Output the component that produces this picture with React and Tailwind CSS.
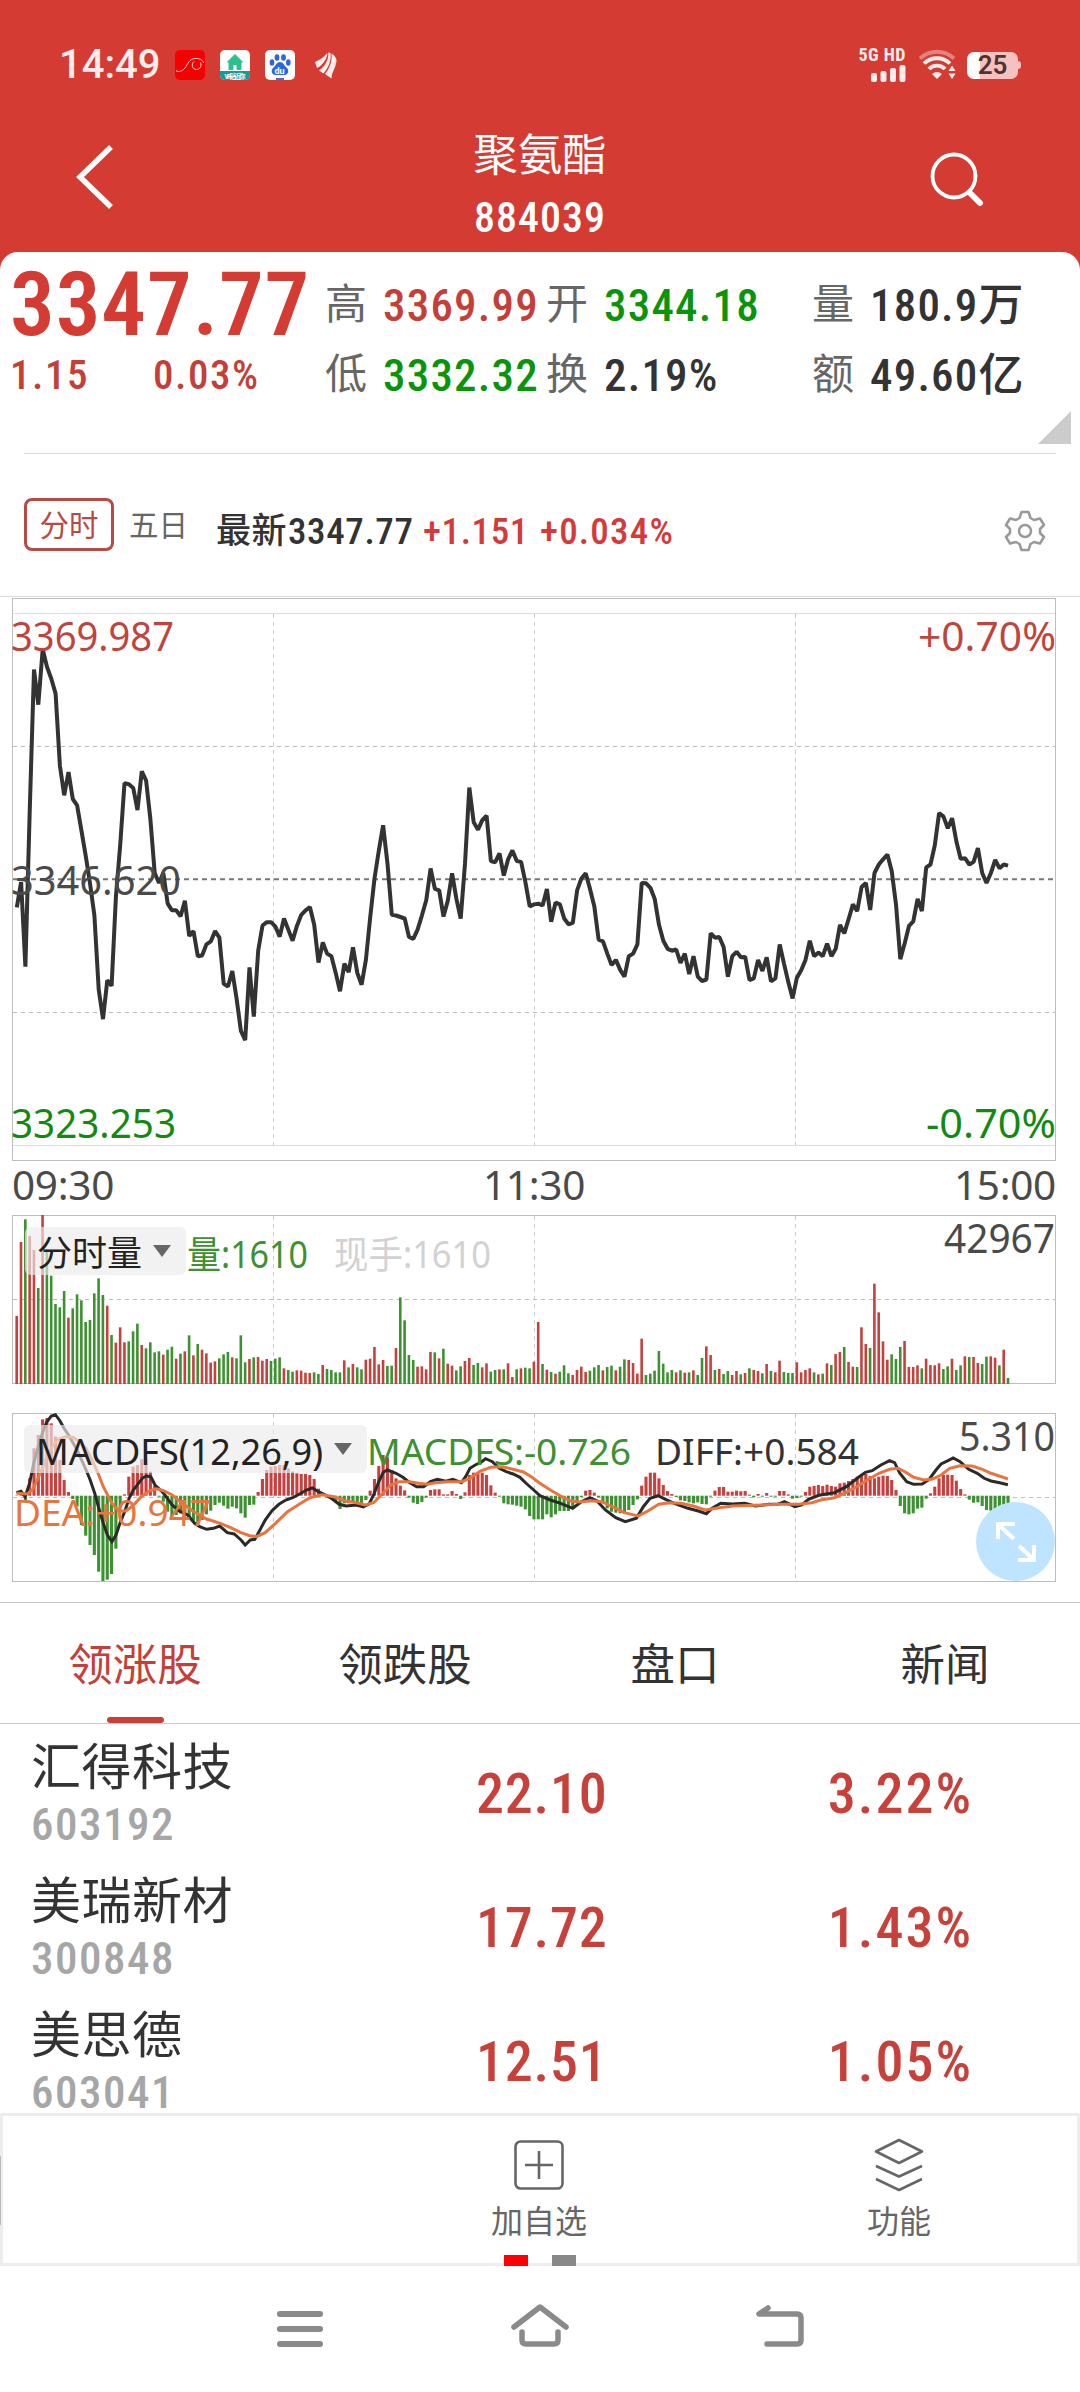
import React from 'react';

// One sample per trading minute, in plot units (larger is lower on the chart)
const PRICE = [
  858, 790, 1018, 600, 215, 310, 160, 208, 240, 280, 475, 555, 492, 565, 582, 650, 720, 795, 880, 1080,
  1160, 1055, 1070, 830, 690, 522, 525, 535, 595, 490, 515, 620, 765, 792, 765, 848, 866, 866, 882, 840,
  935, 922, 990, 988, 958, 950, 922, 940, 1065, 1072, 1030, 1105, 1192, 1217, 1020, 1153, 975, 907, 898, 898,
  910, 937, 888, 918, 948, 908, 878, 866, 857, 905, 1007, 953, 983, 990, 1035, 1085, 1010, 1033, 966, 1035,
  1067, 1000, 885, 780, 705, 636, 740, 878, 880, 884, 888, 938, 943, 918, 880, 838, 753, 808, 812, 883,
  840, 766, 835, 888, 740, 534, 628, 648, 622, 610, 733, 736, 712, 772, 728, 704, 733, 735, 790, 855,
  850, 848, 853, 808, 897, 845, 850, 888, 904, 900, 812, 780, 766, 808, 855, 945, 950, 983, 1014, 1000,
  1027, 1045, 990, 983, 958, 792, 793, 805, 835, 905, 948, 970, 975, 972, 1008, 983, 1038, 990, 1045, 1057,
  1053, 928, 940, 938, 965, 1045, 990, 978, 993, 992, 1055, 1050, 1000, 1030, 993, 1058, 1050, 958, 1010, 1060,
  1104, 1048, 1028, 1000, 948, 990, 980, 990, 956, 990, 970, 905, 928, 890, 850, 868, 803, 792, 865, 765,
  742, 728, 715, 760, 850, 998, 955, 908, 896, 835, 868, 750, 742, 690, 603, 612, 644, 617, 680, 727,
  725, 742, 735, 698, 765, 792, 765, 730, 752, 742, 745,
];

const VOLUME = (
  '498r 276r 208g 258r 300r 414g 195r 298g 377g 462g 472g 423g 503r 475g 433g 451g 516g 510g 430g 385g ' +
  '435g 467r 555g 578r 532r 577r 574g 544g 521g 585r 595g 577g 607g 604g 614r 599g 590g 626r 611g 604r ' +
  '556g 616r 582g 599r 610r 638r 634r 625g 613g 606g 622r 625g 556g 637g 627r 622g 621r 632r 627r 633g ' +
  '626g 622g 655r 660g 665g 661r 662r 668r 669r 667g 672g 645r 657g 660g 667g 667g 631r 652g 642r 652g ' +
  '658g 629r 626r 591r 643r 630r 648g 647g 594r 442g 511g 615g 630g 650r 649r 658r 606r 607g 625r 596g ' +
  '641r 647r 661g 649g 633r 624r 645g 639g 652r 640r 665g 660g 658r 658g 640r 681r 658g 655r 653g 655g ' +
  '635r 516r 642g 659r 666g 671r 665g 646g 670g 675r 660r 650r 666r 662g 652g 645g 661r 651g 647g 661r ' +
  '650g 628g 630r 639r 671r 566r 675g 671g 662g 603g 641g 667g 660g 667r 661g 668r 667g 661r 675g 624g ' +
  '589r 615r 660g 657r 672g 663g 675r 663r 673g 669r 655g 660r 663r 670g 642r 663g 667r 632r 666g 669g ' +
  '669g 637r 667r 660r 655r 667g 673r 671g 640r 645g 612r 606r 591g 636r 650r 651g 532r 582r 594g 401r ' +
  '487r 574r 629r 613g 627g 591g 573r 651r 651r 646r 655g 626r 645r 646r 640r 657g 649g 626r 660g 646g ' +
  '619r 621g 621r 639r 642g 620g 619r 623r 646g 599r 684g'
).split(' ');

const MACD = [
  1036, 1034, 1058, 985, 895, 855, 808, 804, 820, 860, 930, 990, 1026, 1047, 1070, 1125, 1157, 1185, 1215, 1265,
  1293, 1289, 1272, 1196, 1075, 1033, 980, 950, 945, 928, 925, 965, 1008, 1040, 1055, 1085, 1100, 1095, 1090, 1100,
  1105, 1112, 1125, 1110, 1093, 1082, 1065, 1058, 1067, 1076, 1070, 1075, 1090, 1103, 1065, 1064, 1026, 987, 960, 950,
  948, 945, 945, 955, 965, 970, 972, 972, 975, 987, 1016, 1030, 1036, 1040, 1055, 1077, 1060, 1060, 1055, 1062,
  1060, 1050, 1022, 987, 948, 915, 922, 960, 985, 1007, 1021, 1043, 1058, 1062, 1056, 1043, 1020, 1018, 1018, 1033,
  1033, 1023, 1032, 1047, 1027, 975, 968, 968, 968, 975, 1006, 1028, 1040, 1060, 1063, 1064, 1067, 1070, 1078, 1098,
  1108, 1108, 1108, 1093, 1102, 1093, 1083, 1083, 1083, 1075, 1055, 1041, 1022, 1020, 1028, 1042, 1060, 1075, 1085, 1088,
  1090, 1092, 1080, 1065, 1048, 1007, 980, 968, 968, 985, 1005, 1023, 1032, 1041, 1051, 1053, 1057, 1060, 1057, 1062,
  1063, 1040, 1022, 1011, 1011, 1025, 1025, 1022, 1024, 1023, 1034, 1042, 1032, 1040, 1029, 1040, 1040, 1023, 1023, 1033,
  1046, 1044, 1040, 1026, 1010, 1008, 1005, 1008, 1004, 1008, 1010, 1000, 998, 993, 987, 980, 972, 972, 978, 985,
  980, 977, 978, 990, 1020, 1068, 1090, 1093, 1090, 1076, 1073, 1046, 1030, 1010, 985, 975, 974, 975, 992, 1017,
  1033, 1049, 1058, 1057, 1068, 1080, 1082, 1078, 1075, 1071, 1069,
];

const DIFF = [
  48, 1028, 61, 1024, 73, 1040, 86, 1000, 98, 940, 111, 890, 123, 850, 136, 815, 149, 798, 161, 794, 174, 812,
  186, 835, 199, 855, 212, 878, 224, 900, 237, 930, 250, 960, 262, 990, 275, 1030, 287, 1075, 300, 1120, 312, 1155,
  325, 1175, 337, 1155, 350, 1115, 362, 1085, 375, 1045, 387, 1020, 400, 1003, 413, 985, 425, 978, 438, 980,
  450, 1005, 463, 1017, 475, 1030, 488, 1048, 500, 1065, 520, 1083, 545, 1095, 565, 1120, 580, 1130, 600, 1138,
  620, 1135, 638, 1128, 660, 1148, 680, 1152, 700, 1170, 712, 1185, 727, 1170, 740, 1168, 752, 1145, 770, 1110,
  790, 1082, 810, 1063, 830, 1050, 850, 1043, 870, 1032, 890, 1020, 907, 1014, 925, 1025, 945, 1035, 965, 1047,
  985, 1063, 1005, 1068, 1035, 1065, 1055, 1071, 1072, 1062, 1085, 1035, 1100, 995, 1113, 967, 1125, 960, 1150, 970,
  1170, 982, 1190, 998, 1210, 1010, 1230, 1010, 1250, 995, 1270, 988, 1295, 994, 1315, 988, 1340, 998, 1352, 980,
  1365, 955, 1380, 945, 1395, 938, 1410, 926, 1430, 935, 1450, 955, 1470, 965, 1490, 972, 1510, 982, 1530, 1002,
  1550, 1020, 1568, 1037, 1598, 1050, 1628, 1060, 1663, 1075, 1688, 1055, 1713, 1043, 1733, 1052, 1758, 1080,
  1788, 1103, 1816, 1115, 1848, 1105, 1868, 1070, 1888, 1045, 1911, 1037, 1933, 1048, 1958, 1060, 1998, 1075,
  2028, 1083, 2051, 1091, 2068, 1075, 2093, 1060, 2128, 1062, 2163, 1060, 2193, 1068, 2233, 1063, 2258, 1063,
  2278, 1055, 2308, 1070, 2328, 1065, 2348, 1048, 2378, 1036, 2423, 1028, 2458, 1010, 2493, 982, 2513, 967,
  2533, 962, 2558, 945, 2583, 932, 2598, 938, 2613, 970, 2633, 995, 2653, 1003, 2678, 1002, 2698, 988, 2718, 960,
  2733, 942, 2753, 932, 2768, 924, 2788, 935, 2813, 958, 2838, 970, 2858, 985, 2878, 993, 2903, 998, 2927, 1004,
];

const DEA = [
  48, 1030, 80, 1032, 95, 1018, 110, 985, 125, 950, 140, 910, 155, 885, 170, 868, 190, 860, 212, 862, 230, 875,
  250, 895, 265, 925, 285, 970, 300, 1010, 325, 1060, 345, 1083, 365, 1083, 385, 1068, 410, 1040, 435, 1022,
  455, 1016, 475, 1022, 500, 1035, 530, 1060, 560, 1083, 600, 1107, 640, 1120, 670, 1133, 700, 1148, 725, 1157,
  745, 1160, 770, 1148, 800, 1120, 835, 1085, 870, 1062, 900, 1043, 935, 1034, 970, 1040, 1000, 1052, 1035, 1058,
  1060, 1065, 1085, 1058, 1110, 1032, 1135, 1005, 1160, 995, 1190, 995, 1215, 1000, 1240, 1003, 1265, 998,
  1300, 995, 1340, 995, 1365, 985, 1395, 963, 1425, 952, 1460, 950, 1490, 958, 1520, 966, 1545, 982, 1568, 1000,
  1598, 1020, 1628, 1038, 1658, 1053, 1683, 1056, 1718, 1052, 1748, 1055, 1778, 1070, 1813, 1088, 1853, 1098,
  1878, 1085, 1913, 1063, 1943, 1058, 1978, 1060, 2013, 1068, 2048, 1080, 2088, 1073, 2128, 1068, 2188, 1066,
  2268, 1063, 2318, 1063, 2358, 1058, 2383, 1050, 2423, 1043, 2458, 1027, 2488, 1010, 2518, 990, 2553, 970,
  2583, 958, 2608, 955, 2628, 965, 2653, 982, 2683, 990, 2708, 987, 2733, 975, 2758, 955, 2788, 947, 2823, 948,
  2853, 958, 2878, 970, 2908, 980, 2927, 987,
];

const STOCKS = [
  { name: '汇得科技', code: '603192', price: '22.10', change: '3.22%' },
  { name: '美瑞新材', code: '300848', price: '17.72', change: '1.43%' },
  { name: '美思德', code: '603041', price: '12.51', change: '1.05%' },
];

const TABS = ['领涨股', '领跌股', '盘口', '新闻'];

const RED = '#c8403d';
const GREEN = '#3c9130';

const minuteX = (i) => 16.8 + i * 4.31;

// Flat [x, y, x, y, ...] list to an svg points string
function toPoints(list, top) {
  const out = [];
  for (let i = 0; i < list.length; i += 2) {
    out.push(`${(list[i] / 2.904).toFixed(1)},${(list[i + 1] / 3 - top).toFixed(1)}`);
  }
  return out.join(' ');
}

function Label({ x, y, w, size = 40.5, fill = '#4a4a4a', children }) {
  return (
    <text
      x={x}
      y={y}
      textLength={w}
      lengthAdjust="spacingAndGlyphs"
      fontSize={size}
      fill={fill}
      className="font-['Noto_Sans','Noto_Sans_CJK_SC',sans-serif]"
    >
      {children}
    </text>
  );
}

function VerticalGrid({ y1, y2 }) {
  return [273.5, 534.5, 795.5].map((x) => (
    <line key={x} x1={x} x2={x} y1={y1} y2={y2} stroke="#c8c8c8" strokeDasharray="4 4" />
  ));
}

function PriceChart() {
  const points = PRICE.map((v, i) => `${minuteX(i).toFixed(1)},${(v / 2.7034 - 7).toFixed(1)}`).join(' ');
  return (
    <svg className="block overflow-visible" width="1080" height="566" viewBox="0 0 1080 566">
      <rect x="12.5" y="1.5" width="1043" height="562" fill="none" stroke="#bdbdbd" />
      <path d="M13 16.5H1055M13 548.5H1055" stroke="#dedede" />
      <VerticalGrid y1={17} y2={548} />
      <path d="M13 149.5H1055M13 415.5H1055" stroke="#bdbdbd" strokeDasharray="4 4" />
      <line x1="13" x2="1055" y1="282.3" y2="282.3" stroke="#777" strokeWidth="2" strokeDasharray="5 4" />
      <polyline points={points} fill="none" stroke="#333" strokeWidth="4" strokeLinejoin="bevel" />
      <Label x={11} y={53.5} w={163} fill="#bf443d">3369.987</Label>
      <Label x={918} y={53.5} w={138} fill="#bf443d">+0.70%</Label>
      <Label x={11} y={298} w={170}>3346.620</Label>
      <Label x={11} y={540.5} w={165} fill="#128a12">3323.253</Label>
      <Label x={926} y={540.5} w={130} fill="#128a12">-0.70%</Label>
    </svg>
  );
}

function VolumeChart() {
  return (
    <svg className="block overflow-visible" width="1080" height="176" viewBox="0 0 1080 176">
      <rect x="12.5" y="3.5" width="1043" height="168" fill="none" stroke="#bdbdbd" />
      <VerticalGrid y1={4} y2={171} />
      <path d="M13 87.5H1055" stroke="#bdbdbd" strokeDasharray="4 4" />
      {VOLUME.map((v, i) => {
        const y = parseInt(v, 10) / 3 - 62;
        return (
          <rect key={i} x={minuteX(i) - 1.4} y={y} width="2.6" height={172 - y} fill={v.endsWith('r') ? RED : GREEN} />
        );
      })}
      <rect x="25" y="15" width="161" height="48" rx="6" fill="#ebebeb" fillOpacity="0.66" />
      <Label x={37} y={54} w={105} size={35} fill="#222">分时量</Label>
      <path d="M153 33H171L162 45Z" fill="#666" />
      <Label x={187} y={55.5} w={121} size={38} fill={GREEN}>量:1610</Label>
      <Label x={334} y={55.5} w={157} size={38} fill="#d2d2d2">现手:1610</Label>
      <Label x={944} y={40.5} w={111}>42967</Label>
    </svg>
  );
}

function MacdChart() {
  return (
    <svg className="block overflow-visible" width="1080" height="176" viewBox="0 0 1080 176">
      <rect x="12.5" y="3.5" width="1043" height="168" fill="none" stroke="#bdbdbd" />
      <VerticalGrid y1={4} y2={171} />
      <path d="M13 87.5H1055" stroke="#bdbdbd" strokeDasharray="4 4" />
      {MACD.map((v, i) => {
        const y = v / 3 - 260;
        const base = 85.7;
        return (
          <rect
            key={i}
            x={minuteX(i) - 1.6}
            y={Math.min(y, base)}
            width="3.1"
            height={Math.abs(base - y)}
            fill={v < 1037 ? RED : GREEN}
          />
        );
      })}
      <polyline points={toPoints(DIFF, 260)} fill="none" stroke="#2a2a2a" strokeWidth="3" />
      <polyline points={toPoints(DEA, 260)} fill="none" stroke="#e8743f" strokeWidth="3" />
      <rect x="24" y="15" width="343" height="48" rx="6" fill="#ebebeb" fillOpacity="0.66" />
      <Label x={36} y={54.5} w={287} size={37} fill="#222">MACDFS(12,26,9)</Label>
      <path d="M334 33H352L343 45Z" fill="#666" />
      <Label x={367} y={54.5} w={264} size={37} fill={GREEN}>MACDFS:-0.726</Label>
      <Label x={655} y={54.5} w={204} size={37} fill="#333">DIFF:+0.584</Label>
      <Label x={14} y={115.5} w={197} size={37} fill="#e8743f">DEA:+0.947</Label>
      <Label x={959} y={41} w={96}>5.310</Label>
    </svg>
  );
}

function StatusBar() {
  return (
    <div className="flex h-[130px] items-center pr-[59px] pl-[59px]">
      <span className="w-[116px] text-[40px] leading-none font-medium text-[#ffeceb]">14:49</span>
      <svg className="mr-[15px]" width="30" height="30" viewBox="0 0 30 30">
        <rect width="30" height="30" rx="5" fill="#f80000" />
        <path d="M1 20.500C3 22.500 7 21.500 10 18C13 14 14 9 20 8.500C26 8 28 11 28.500 13" fill="none" stroke="#ffd9d6" />
        <path d="M19 11.500C16 14 17 19.500 21.500 19.500C25 19.500 27 16 25.500 12.500" fill="none" stroke="#ffd9d6" />
      </svg>
      <svg className="mr-[15px]" width="30" height="30" viewBox="0 0 30 30">
        <rect width="30" height="30" rx="5" fill="#fff" />
        <path d="M0 21H30V25A5 5 0 0 1 25 30H5A5 5 0 0 1 0 25Z" fill="#139c9b" />
        <path d="M15 4.500L7.500 12H9V19.500H13V14.500H17V19.500H21V12H22.500Z" fill="#2cc08c" stroke="#2cc08c" />
        <text x="4.500" y="28.500" fontSize="6.500" fontWeight="700" textLength="21" fill="#fff">VR贴近你</text>
      </svg>
      <svg className="mr-[20px]" width="30" height="30" viewBox="0 0 30 30">
        <rect width="30" height="30" rx="5" fill="#fff" />
        <g fill="#2c66dc">
          <ellipse cx="7" cy="12.500" rx="2.300" ry="3.200" />
          <ellipse cx="12" cy="7.500" rx="2.400" ry="3.300" />
          <ellipse cx="18.500" cy="7.500" rx="2.400" ry="3.300" />
          <ellipse cx="23.300" cy="12.500" rx="2.300" ry="3.200" />
          <path d="M15 12C11.500 12 11 15.500 8.500 17.500C5.500 20 6.500 25 10.500 25H19.500C23.500 25 24.500 20 21.500 17.500C19 15.500 18.500 12 15 12Z" />
        </g>
        <rect x="11" y="28" width="8" height="2" fill="#4f62e6" />
        <text x="9.500" y="23.500" fontSize="9" fontWeight="700" fill="#fff">du</text>
      </svg>
      <svg width="22" height="27" viewBox="0 0 22 27" fill="#ffeceb">
        <path d="M0 10C5 8 9 5 12.500 1C12 7 7.500 13.500 2 16Z" />
        <path d="M13.300 0.500C14 8 9.500 15 4 18.500L8.500 21.500C14 15 16.500 8 15.500 1Z" />
        <path d="M16.500 1.500C17.500 10 14 17 10 22L16.500 26.500C16.500 20 21.500 15 21.500 8C21 5 19 3 16.500 1.500Z" />
      </svg>
      <div className="mr-[13px] ml-auto flex flex-col items-end gap-[4px]">
        <span className="font-stretch-semi-condensed text-[18px] leading-[13px] font-bold tracking-[0.5px] text-[#ffeceb]">5G HD</span>
        <svg width="35" height="17" viewBox="0 0 35 17" fill="#ffeceb">
          <rect y="8" width="6" height="9" rx="2" />
          <rect x="9.500" y="6" width="6" height="11" rx="2" />
          <rect x="19" y="3" width="6" height="14" rx="2" />
          <rect x="28.500" width="6" height="17" rx="2" />
        </svg>
      </div>
      <svg className="mr-[12px] overflow-visible" width="36" height="30" viewBox="0 0 36 30" fill="none" strokeWidth="3.800">
        <path d="M1 8.500C11 -0.500 25 -0.500 35 8.500" stroke="#e5827d" />
        <path d="M5 13.500C12 6.500 24 6.500 31 13.500" stroke="#ffeceb" />
        <path d="M10 19C14 14.500 22 14.500 26 19" stroke="#ffeceb" />
        <path d="M13 24Q18 20 23 24L18 29Z" fill="#ffeceb" />
        <path d="M29.500 21L33 15.500L36.500 21ZM29.500 23.500L33 29L36.500 23.500Z" fill="#ffeceb" />
      </svg>
      <div className="flex items-center">
        <div className="flex h-[27px] w-[51px] items-center justify-center overflow-hidden rounded-[7px] bg-linear-to-r from-white from-25% to-[#f5c2c0] to-25%">
          <span className="text-[26px] leading-[27px] font-semibold text-[#4d3331]">25</span>
        </div>
        <div className="h-2 w-[3px] rounded-r-[3px] bg-[#f5c2c0]" />
      </div>
    </div>
  );
}

function TitleBar() {
  return (
    <div className="flex h-[122px] items-start justify-between pr-[96px] pl-[76px]">
      <svg className="mt-[15px]" width="37" height="64" viewBox="0 0 37 64">
        <path d="M35 2L4 32L35 62" fill="none" stroke="#fff" strokeWidth="5.500" />
      </svg>
      <div className="flex w-[177px] flex-col items-center pt-[2px] pl-[37px] text-white">
        <span className="h-[60px] text-[44.5px] leading-[48px] whitespace-nowrap">聚氨酯</span>
        <span className="font-stretch-semi-condensed text-[42px] leading-[52px] font-medium tracking-[1px]">884039</span>
      </div>
      <svg className="mt-[22px]" width="54" height="56" viewBox="0 0 54 56" fill="none" stroke="#fff" strokeLinecap="round">
        <circle cx="24" cy="24" r="21.500" strokeWidth="3.800" />
        <path d="M41 42L50 51" strokeWidth="6" />
      </svg>
    </div>
  );
}

function Stat({ label, value, className }) {
  return (
    <div className="flex items-center whitespace-nowrap">
      <span className="w-[58px] text-[42px] leading-[46px] text-[#666]">{label}</span>
      <span className={`font-stretch-semi-condensed text-[45px] leading-none font-medium tracking-[1.2px] ${className}`}>{value}</span>
    </div>
  );
}

function Quote() {
  return (
    <div className="rounded-t-[18px] bg-white pt-[18px]">
      <div className="grid grid-cols-[315px_221px_266px_1fr] grid-rows-[70px_70px] pl-[10px]">
        <div className="font-stretch-semi-condensed flex items-center text-[89px] leading-[70px] font-semibold tracking-[0.9px] text-[#d33b33]">
          3347.77
        </div>
        <Stat label="高" value="3369.99" className="text-[#c43f38]" />
        <Stat label="开" value="3344.18" className="text-[#0a940a]" />
        <Stat label="量" value="180.9万" className="text-[#333]" />
        <div className="font-stretch-semi-condensed flex items-center text-[41px] leading-none font-medium tracking-[1.5px] text-[#c43f38]">
          <span className="w-[143px]">1.15</span>
          <span>0.03%</span>
        </div>
        <Stat label="低" value="3332.32" className="text-[#0a940a]" />
        <Stat label="换" value="2.19%" className="text-[#333]" />
        <Stat label="额" value="49.60亿" className="text-[#333]" />
      </div>
      <div className="flex h-[43px] justify-end pr-[9px]">
        <svg className="mt-px" width="33" height="33" viewBox="0 0 33 33">
          <path d="M33 0V33H0Z" fill="#ccc" />
        </svg>
      </div>
      <div className="mx-6 border-b border-[#dcdcdc]" />
    </div>
  );
}

function PeriodBar() {
  return (
    <div className="flex h-[143px] items-start border-b border-[#dcdcdc] pt-[44px] pr-[34px] pl-6">
      <div className="flex h-[53px] w-[90px] items-center justify-center rounded-lg border-[3px] border-[#b84a45] pt-[3px] text-[29.5px] text-[#b84a45]">
        分时
      </div>
      <span className="mt-[2px] ml-[15px] w-[73px] text-[29.5px] leading-[53px] text-[#666]">五日</span>
      <div className="font-stretch-semi-condensed mt-[7px] ml-[14px] flex text-[37px] leading-[53px] font-medium tracking-[0.6px] whitespace-nowrap text-[#d53a3a]">
        <span className="w-[72px] text-[35px] text-[#333]">最新</span>
        <span className="w-[135px] text-[#333]">3347.77</span>
        <span className="w-[117px]">+1.151</span>
        <span className="tracking-[1.2px]">+0.034%</span>
      </div>
      <svg className="mt-[12px] ml-auto" width="42" height="42" viewBox="0 0 42 42" fill="none" stroke="#999" strokeWidth="2.500" strokeLinejoin="round">
        <path d="M17.500 2H24.500L26.500 8L30 10L36 8.500L40 15L36 19V23L40 27L36 33.500L30 32L26.500 34L24.500 40H17.500L15.500 34L12 32L6 33.500L2 27L6 23V19L2 15L6 8.500L12 10L15.500 8Z" />
        <circle cx="21" cy="21" r="6" />
      </svg>
    </div>
  );
}

function StockRow({ stock }) {
  return (
    <div className="flex h-[134px] shrink-0 items-start pl-[31px]">
      <div className="flex w-[445px] flex-col">
        <span className="mt-[16px] h-[56px] text-[50px] leading-[56px] tracking-[0.5px] text-[#333]">{stock.name}</span>
        <span className="font-stretch-semi-condensed pt-px text-[45px] leading-[56px] font-medium tracking-[1.5px] text-[#a6a6a6]">{stock.code}</span>
      </div>
      <span className="font-stretch-semi-condensed mt-[40px] w-[200px] text-[56px] leading-[60px] font-medium tracking-[0.8px] text-[#c8403a]">
        {stock.price}
      </span>
      <span className="font-stretch-semi-condensed mt-[40px] w-[297px] text-right text-[56px] leading-[60px] font-medium tracking-[2px] text-[#c8403a]">
        {stock.change}
      </span>
    </div>
  );
}

function BottomBar() {
  return (
    <div className="relative flex h-[153px] shrink-0 justify-end border-[3px] border-[#ededed] bg-white text-[32px] leading-[38px] text-[#666]">
      <div className="absolute top-[40px] -left-[3px] h-[69px] w-px bg-[#bbb]" />
      <div className="flex w-[360px] flex-col items-center pt-[24px]">
        <svg width="50" height="50" viewBox="0 0 50 50" fill="none" stroke="#666" strokeWidth="2.600">
          <rect x="1.500" y="1.500" width="47" height="47" rx="5" />
          <path d="M25 11V39M11 25H39" />
        </svg>
        <span className="mt-[13px]">加自选</span>
      </div>
      <div className="-mr-[2px] flex w-[360px] flex-col items-center pt-[22px]">
        <svg width="52" height="54" viewBox="0 0 52 54" fill="none" stroke="#666" strokeWidth="2.600" strokeLinejoin="round">
          <path d="M26 2L49 13.500L26 25L3 13.500Z" />
          <path d="M3 28L26 38.500L49 28M3 41L26 52L49 41" />
        </svg>
        <span className="mt-[11px]">功能</span>
      </div>
      <div className="absolute -bottom-[3px] left-[501px] flex gap-6">
        <div className="h-[11px] w-6 bg-[#f00]" />
        <div className="h-[11px] w-6 bg-[#888]" />
      </div>
    </div>
  );
}

function SystemNav() {
  return (
    <div className="flex h-[126px] items-start gap-[187px] pt-[37px] pl-[276px]">
      <svg width="48" height="46" viewBox="0 0 48 46" stroke="#8a8a8a" strokeWidth="6" strokeLinecap="round">
        <path d="M4 11H44M4 26H44M4 41H44" />
      </svg>
      <svg width="58" height="46" viewBox="0 0 58 46" fill="none" stroke="#8a8a8a" strokeWidth="5.500" strokeLinecap="round" strokeLinejoin="round">
        <path d="M3 24L29 4L55 24" />
        <path d="M11 29V37Q11 41 15 41H43Q47 41 47 37V29" />
      </svg>
      <svg width="50" height="46" viewBox="0 0 50 46" fill="none" stroke="#8a8a8a" strokeWidth="5.500" strokeLinecap="round" strokeLinejoin="round">
        <path d="M12 5L3 11H41Q45 11 45 15V37Q45 41 41 41H11" />
      </svg>
    </div>
  );
}

export default function App() {
  return (
    <div className="flex h-[2392px] w-[1080px] flex-col overflow-hidden bg-white font-[Roboto,'Noto_Sans_CJK_SC',sans-serif]">
      <div className="bg-[#d33b33]">
        <StatusBar />
        <TitleBar />
        <Quote />
      </div>
      <PeriodBar />

      <div className="relative">
        <PriceChart />
        <div className="flex h-[49px] justify-between pr-[24px] pl-3 font-['Noto_Sans',sans-serif] text-[40.5px] leading-[44px] tracking-[-0.3px] text-[#4a4a4a]">
          <span>09:30</span>
          <span>11:30</span>
          <span>15:00</span>
        </div>
        <VolumeChart />
        <div className="h-[22px]" />
        <MacdChart />
        <button className="absolute top-[905px] left-[976px] flex size-[79px] items-center justify-center rounded-full bg-[#bfe4ff]">
          <svg width="44" height="44" viewBox="0 0 44 44" fill="none" stroke="#fff" strokeWidth="4">
            <path d="M4 19V4H21M5 5L20 19" />
            <path d="M40 25V40H24M39 39L25 26" />
          </svg>
        </button>
      </div>

      <div className="mt-[16px] flex h-[122px] shrink-0 border-y border-[#c9c9c9]">
        {TABS.map((tab, i) => (
          <div
            key={tab}
            className={`flex w-[270px] flex-col items-center pt-[33px] text-[44.5px] leading-[60px] ${i === 0 ? 'text-[#c43f38]' : 'text-[#333]'}`}
          >
            {tab}
            {i === 0 && <div className="mt-auto h-[6px] w-[57px] rounded-[3px] bg-[#c8403a]" />}
          </div>
        ))}
      </div>

      <div className="flex h-[389px] shrink-0 flex-col overflow-hidden">
        {STOCKS.map((stock) => (
          <StockRow key={stock.code} stock={stock} />
        ))}
      </div>

      <BottomBar />
      <SystemNav />
    </div>
  );
}
